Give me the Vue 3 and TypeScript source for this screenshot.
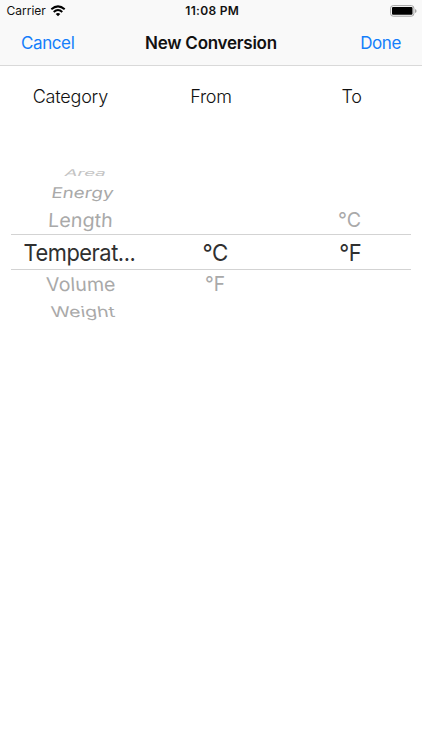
<script setup lang="ts">
interface PickerRow {
  label: string
  kind: string
}
interface PickerColumn {
  name: string
  rows: PickerRow[]
}

const headings: string[] = ['Category', 'From', 'To']

const columns: PickerColumn[] = [
  {
    name: 'category',
    rows: [
      { label: 'Area', kind: 'up3' },
      { label: 'Energy', kind: 'up2' },
      { label: 'Length', kind: 'up1' },
      { label: 'Temperat...', kind: 'current' },
      { label: 'Volume', kind: 'down1' },
      { label: 'Weight', kind: 'down2' },
    ],
  },
  {
    name: 'from',
    rows: [
      { label: '', kind: 'up3' },
      { label: '', kind: 'up2' },
      { label: '', kind: 'up1' },
      { label: '°C', kind: 'current' },
      { label: '°F', kind: 'down1' },
      { label: '', kind: 'down2' },
    ],
  },
  {
    name: 'to',
    rows: [
      { label: '', kind: 'up3' },
      { label: '', kind: 'up2' },
      { label: '°C', kind: 'up1' },
      { label: '°F', kind: 'current' },
      { label: '', kind: 'down1' },
      { label: '', kind: 'down2' },
    ],
  },
]
</script>

<template>
  <main class="screen">
    <header class="top">
      <div class="status">
        <div class="carrier">
          <span>Carrier</span>
          <svg class="wifi" viewBox="0 0 16 12" width="16" height="12">
            <path d="M1.3 4.2Q8 -1.5 14.7 4.2" />
            <path d="M3.7 6.9Q8 3.2 12.3 6.9" />
            <path class="dot" d="M5.7 8.9Q8 7 10.3 8.9L8 11.3Z" />
          </svg>
        </div>
        <time class="clock">11:08 PM</time>
        <svg class="battery" viewBox="0 0 27 12" width="27" height="12">
          <rect class="shell" x=".6" y=".6" width="23.3" height="10.6" rx="2.6" />
          <rect x="2" y="2" width="20.5" height="7.8" rx="1" />
          <path class="cap" d="M25 4Q26.6 4.5 26.6 6T25 8Z" />
        </svg>
      </div>
      <nav class="bar">
        <button class="action cancel">Cancel</button>
        <h1>New Conversion</h1>
        <button class="action done">Done</button>
      </nav>
    </header>
    <div class="headings">
      <span v-for="h in headings" :key="h">{{ h }}</span>
    </div>
    <section class="picker">
      <div v-for="c in columns" :key="c.name" class="column" :class="c.name">
        <div v-for="(r, i) in c.rows" :key="i" class="row" :class="r.kind">
          <span>{{ r.label }}</span>
        </div>
      </div>
    </section>
  </main>
</template>

<style>
body {
  background: #fff;
}
</style>

<style scoped>
.screen {
  height: 750px;
  box-sizing: border-box;
  background: #fff;
  color: #111;
  font-family: Inter, 'Liberation Sans', sans-serif;
  overflow: hidden;
}
.top {
  height: 66px;
  box-sizing: border-box;
  background: #f9f9f9;
  border-bottom: 1px solid #d9d9d9;
}
.status,
.bar {
  display: grid;
  grid-template-columns: 1fr auto 1fr;
  align-items: center;
}
.status {
  height: 21px;
  padding: 0 5px 0 6.5px;
}
.carrier {
  display: flex;
  align-items: center;
  gap: 4px;
  font-size: 12px;
}
.wifi path {
  fill: none;
  stroke: #000;
  stroke-width: 2;
}
.wifi .dot {
  fill: #000;
  stroke: none;
}
.clock {
  padding-left: 1px;
  font-size: 12px;
  font-weight: 600;
  letter-spacing: 0.3px;
}
.battery {
  justify-self: end;
}
.shell {
  fill: none;
  stroke: #a3a3a3;
}
.cap {
  fill: #a3a3a3;
}
.bar {
  height: 43px;
  padding: 0 21px;
}
.bar h1 {
  margin: 0;
  font-size: 17px;
  font-weight: 600;
  letter-spacing: -0.25px;
}
.action {
  border: 0;
  padding: 0;
  background: none;
  color: #147efb;
  font: 400 17px Inter, sans-serif;
  letter-spacing: -0.4px;
}
.cancel {
  justify-self: start;
}
.done {
  justify-self: end;
}
.headings {
  height: 61px;
  display: grid;
  grid-template-columns: repeat(3, 1fr);
  align-items: center;
  text-align: center;
  font-size: 18px;
  font-weight: 300;
  letter-spacing: -0.2px;
}
.picker {
  margin: 38px 11px 0;
  display: grid;
  grid-template-columns: 137px 137px 1fr;
}
.row {
  box-sizing: border-box;
  display: flex;
  align-items: center;
  justify-content: center;
  color: #a9a9a9;
  font-size: 20px;
  white-space: nowrap;
}
.row span {
  display: block;
}
.up3 {
  height: 16px;
  color: #c4c4c4;
}
.up2 {
  height: 23px;
}
.up1 {
  height: 30px;
}
.current {
  height: 36px;
  border: solid #d3d3d3;
  border-width: 1px 0;
  color: #303030;
  font-size: 23.5px;
  letter-spacing: -0.5px;
}
.down1 {
  height: 28px;
}
.down2 {
  height: 26px;
}
.category .up3 span {
  transform: translateX(6.5px) scale(0.93, 0.46) skewX(-11deg);
}
.category .up2 span {
  transform: translateX(3.5px) scale(0.94, 0.74) skewX(-7deg);
}
.category .up1 span {
  transform: translate(0.8px, 1.2px) scale(0.99, 0.97) skewX(-3deg);
}
.category .current span {
  transform: translate(0.3px, -0.5px) scaleX(0.93);
}
.category .down1 span {
  transform: translateX(1.5px) scale(0.98, 0.95) skewX(3deg);
}
.category .down2 span {
  transform: translate(3px, 0.5px) scale(0.97, 0.74) skewX(6deg);
}
.from .current span {
  transform: translate(-1.2px, -0.5px) scaleX(0.95);
}
.from .down1 span {
  transform: translateX(-1.5px) scaleX(0.96);
}
.to .up1 span {
  transform: translate(1.7px, 0.7px) scaleX(0.98);
}
.to .current span {
  transform: translate(2.5px, -0.5px) scaleX(0.93);
}
</style>
